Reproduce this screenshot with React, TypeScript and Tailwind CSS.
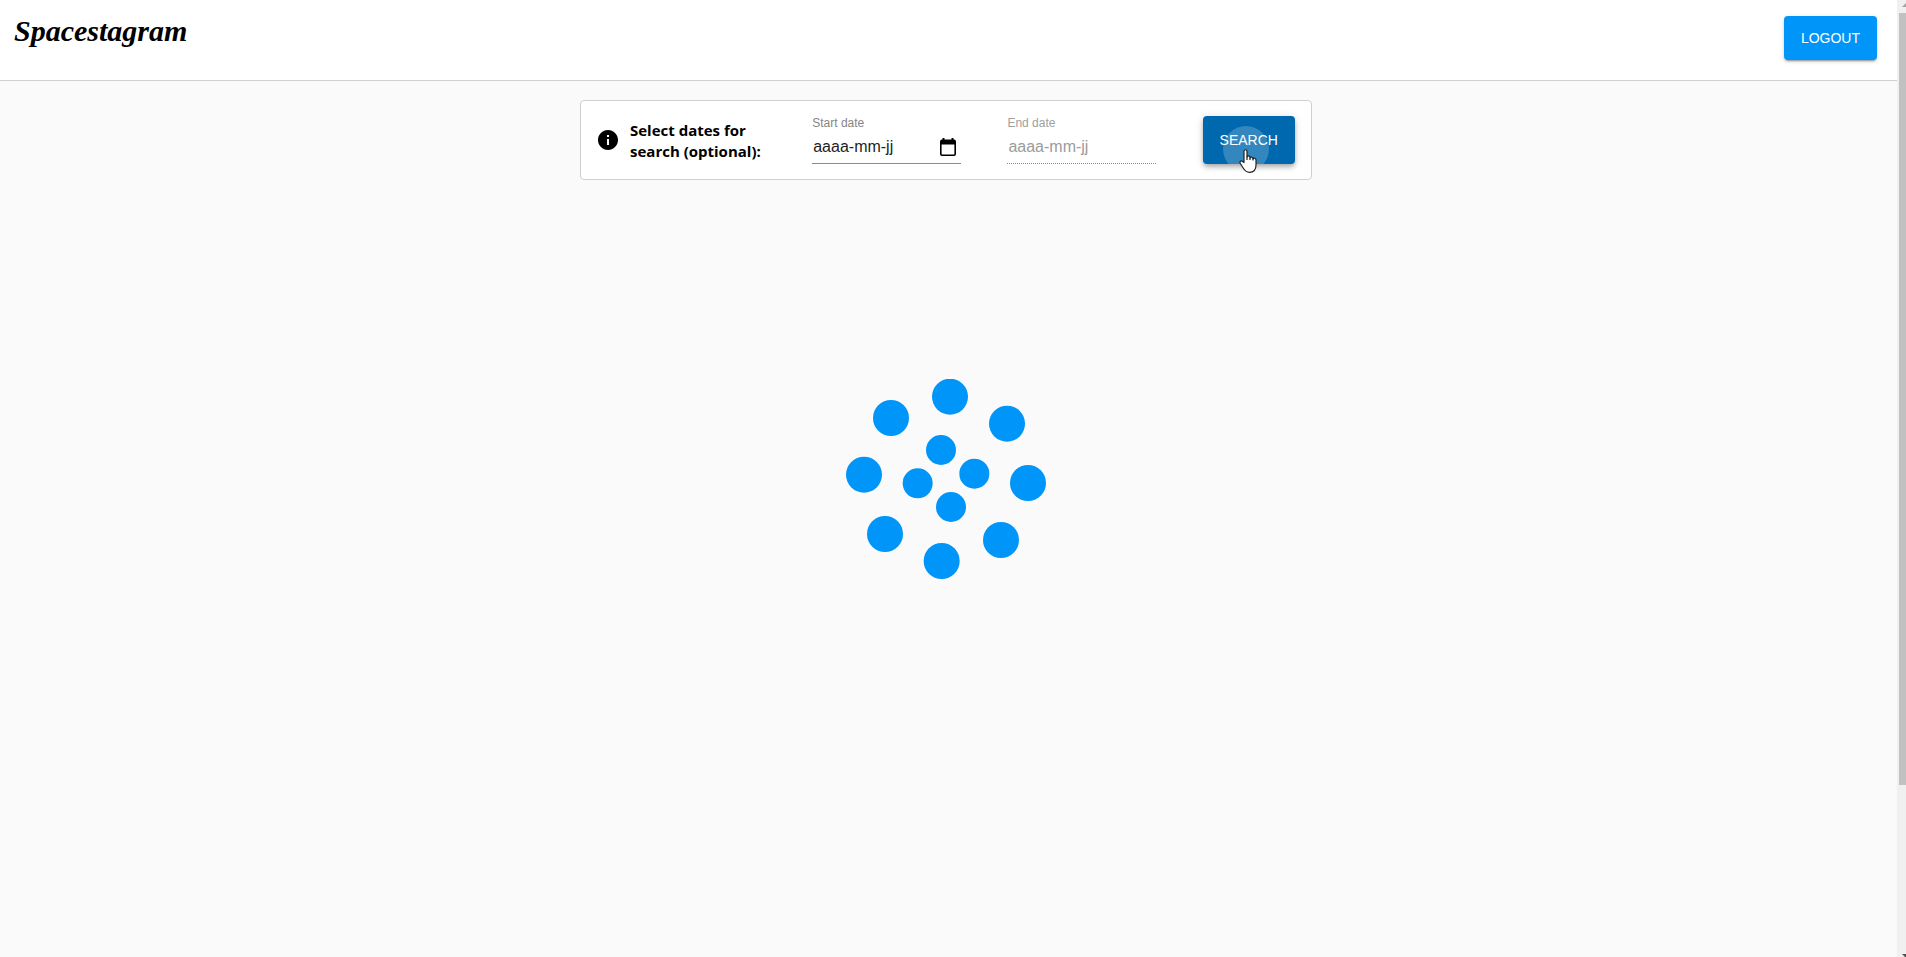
import { useId, useState } from "react";

const outerDots = [
  [312, 53],
  [483, 134],
  [546, 312],
  [465, 483],
  [287, 546],
  [117, 465],
  [54, 287],
  [135, 117],
];

const innerDots = [
  [285, 213],
  [385, 284],
  [315, 384],
  [215, 313],
];

function Header() {
  return (
    <header className="flex h-[81px] items-start justify-between border-b border-[#cfcfcf] bg-white pt-4 pr-5 pl-3.5">
      <a
        href="#home"
        className="font-['Liberation_Serif',serif] text-[30px] leading-[30px] font-bold text-black italic"
      >
        Spacestagram
      </a>
      <button
        type="button"
        className="h-11 rounded bg-[#0095f9] px-[17px] text-sm text-white shadow-[0_3px_1px_-2px_rgba(0,0,0,0.2),0_2px_2px_0_rgba(0,0,0,0.14),0_1px_5px_0_rgba(0,0,0,0.12)]"
      >
        LOGOUT
      </button>
    </header>
  );
}

function CalendarIcon() {
  return (
    <svg viewBox="0 0 16 18" className="h-[18px] w-4" aria-hidden="true">
      <path
        fill="#000"
        fillRule="evenodd"
        d="M2.5 0h2v1.5h7V0h2v1.5H14a2 2 0 0 1 2 2V16a2 2 0 0 1-2 2H2a2 2 0 0 1-2-2V3.500a2 2 0 0 1 2-2h.5zM1.600 6.500V16c0 .3.200.5.500.5h11.800c.3 0 .5-.2.5-.5V6.500z"
      />
    </svg>
  );
}

function DateField({ label, disabled = false }: { label: string; disabled?: boolean }) {
  const id = useId();
  const [value, setValue] = useState("");
  return (
    <div className="w-[149px] pb-0.5">
      <label
        htmlFor={id}
        className={
          disabled
            ? "block text-xs leading-4 text-[#a0a0a0]"
            : "block text-xs leading-4 text-[#868686]"
        }
      >
        {label}
      </label>
      <div
        className={
          disabled
            ? "flex h-[33px] items-center border-b border-dotted border-[#8c8c8c] pt-px"
            : "flex h-[33px] items-center border-b border-[#8c8c8c] pt-px pr-[5px]"
        }
      >
        <input
          id={id}
          type="text"
          value={value}
          onChange={(event) => setValue(event.target.value)}
          placeholder="aaaa-mm-jj"
          disabled={disabled}
          className={
            disabled
              ? "min-w-0 flex-1 bg-transparent pl-px text-base text-[#9b9b9b] outline-none placeholder:text-[#9b9b9b]"
              : "min-w-0 flex-1 bg-transparent pl-px text-base text-[#1e1e1e] outline-none placeholder:text-[#1e1e1e]"
          }
        />
        {!disabled && (
          <button type="button" aria-label="Open calendar">
            <CalendarIcon />
          </button>
        )}
      </div>
    </div>
  );
}

function SearchButton() {
  return (
    <div className="relative">
      <button
        type="submit"
        className="relative h-12 overflow-hidden rounded bg-[#0068ae] px-[17px] text-sm text-white shadow-[0_2px_4px_-1px_rgba(0,0,0,0.2),0_4px_5px_0_rgba(0,0,0,0.14),0_1px_10px_0_rgba(0,0,0,0.12)]"
      >
        <span className="absolute top-2.5 left-5 size-[46px] rounded-full bg-white/20" />
        <span className="relative">SEARCH</span>
      </button>
      <svg
        viewBox="0 0 18 24"
        className="absolute top-[33px] left-9 h-6 w-[18px]"
        aria-hidden="true"
      >
        <path
          d="M5 13.500V2.300C5 .2 8 .2 8 2.300V8c0-1.500 3-1.500 3 .2V9c.2-1.500 3-1.200 3 .5v.5c.4-1.300 3-1 3 1v5c0 4-2 7.300-6.500 7.300-3.500 0-5-1.800-6.500-4.500L1.200 14.200c-.8-1.700.8-2.700 2-1.900z"
          fill="#fff"
          stroke="#222"
          strokeWidth="1.200"
          strokeLinejoin="round"
        />
        <path d="M8 7.500V11M11 8.500V11M14 9.500V11.500" fill="none" stroke="#222" strokeWidth="1.200" />
      </svg>
    </div>
  );
}

function SearchPanel() {
  return (
    <form
      onSubmit={(event) => event.preventDefault()}
      className="flex h-20 w-[732px] max-w-full items-center justify-between rounded border border-[#cfcfcf] bg-white pr-4 pl-[15px]"
    >
      <div className="flex items-center gap-2.5">
        <svg viewBox="0 0 24 24" className="size-6" aria-hidden="true">
          <path d="M12 2C6.480 2 2 6.480 2 12s4.480 10 10 10 10-4.480 10-10S17.520 2 12 2zm1 15h-2v-6h2v6zm0-8h-2V7h2v2z" />
        </svg>
        <p className="w-[136px] pt-0.5 font-['Open_Sans',sans-serif] text-[15px] leading-[21px] font-bold text-black">
          Select dates for search (optional):
        </p>
      </div>
      <DateField label="Start date" />
      <DateField label="End date" disabled />
      <SearchButton />
    </form>
  );
}

function Spinner() {
  return (
    <svg viewBox="0 0 600 600" className="size-[200px]" fill="#0095f9" role="status" aria-label="Loading">
      {outerDots.map(([x, y]) => (
        <circle key={`${x}-${y}`} cx={x} cy={y} r="54" />
      ))}
      {innerDots.map(([x, y]) => (
        <circle key={`${x}-${y}`} cx={x} cy={y} r="45" />
      ))}
    </svg>
  );
}

function ScrollTrack() {
  return (
    <div
      aria-hidden="true"
      className="flex h-screen w-[9px] shrink-0 flex-col justify-between overflow-hidden bg-[#f0f0f0] pl-0.5"
    >
      <svg viewBox="0 0 7 13" className="h-[13px] w-[7px] shrink-0">
        <path d="M3 7L7 3V7z" fill="#a3a3a3" />
      </svg>
      <div className="flex-1">
        <div className="h-[82%] bg-[#c1c1c1]" />
      </div>
      <svg viewBox="0 0 7 3" className="h-[3px] w-[7px] shrink-0">
        <path d="M3 0H7V3H6z" fill="#505050" />
      </svg>
    </div>
  );
}

export default function App() {
  return (
    <div className="flex min-h-screen bg-[#fafafa] font-['Liberation_Sans',Arial,sans-serif]">
      <div className="min-w-0 flex-1">
        <Header />
        <main className="flex flex-col items-center pt-[19px] pr-[5px]">
          <SearchPanel />
          <div className="pt-[199px]">
            <Spinner />
          </div>
        </main>
      </div>
      <ScrollTrack />
    </div>
  );
}
